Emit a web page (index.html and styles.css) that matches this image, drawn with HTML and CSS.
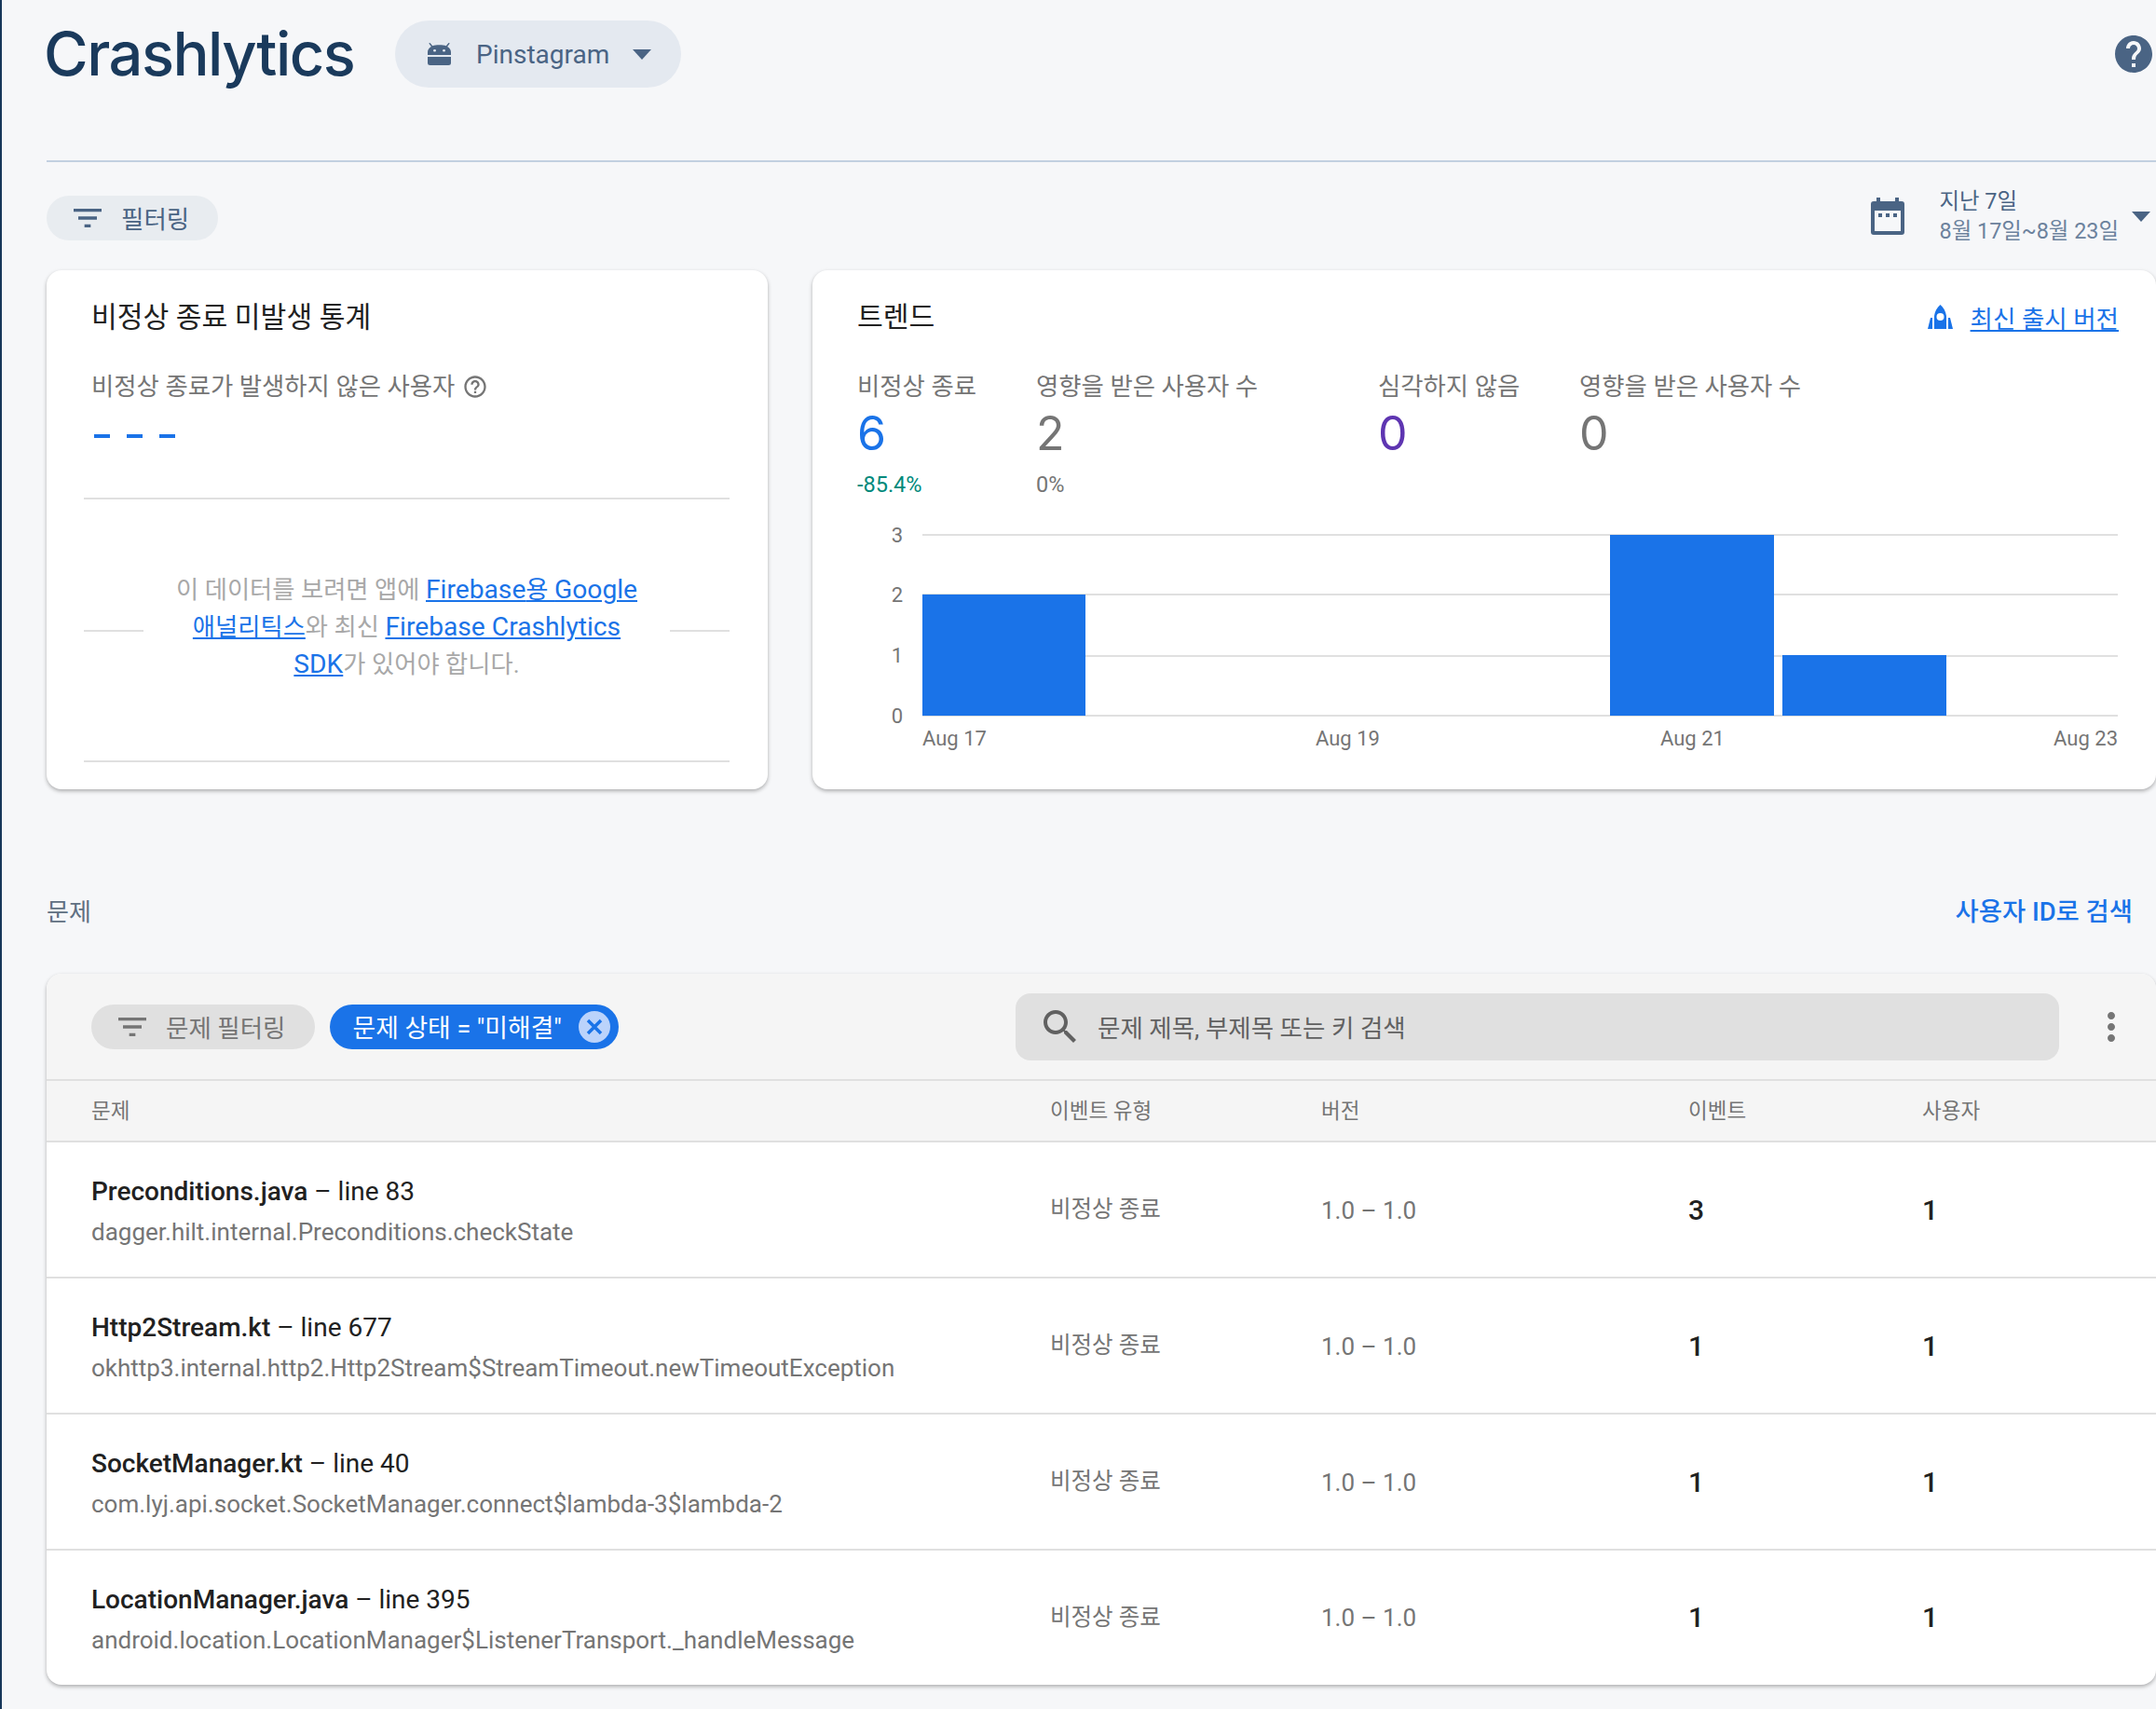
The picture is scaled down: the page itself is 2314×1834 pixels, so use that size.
FILE: index.html
```html
<!DOCTYPE html>
<html lang="ko">
<head>
    <meta charset="UTF-8">
    <title>Crashlytics</title>
    <link rel="stylesheet" href="styles.css">
</head>
<body>
    <div class="rail"></div>
    <main class="page">
        <header class="page-head">
            <h1 class="page-title">Crashlytics</h1>
            <div class="app-picker">
                <svg class="app-icon" viewBox="2.500 0 20 24" preserveAspectRatio="none"><path fill-rule="evenodd" d="M4.500 0l2.200 3.300C8.100 2.700 10.200 2.300 12.500 2.300s4.400.4 5.800 1L20.500 0l1 .6-2.100 3.300c2.100 1.400 3.100 3.700 3.100 6.100v3H2.500v-3c0-2.400 1-4.700 3.100-6.100L3.500.6zM8.500 7a1.200 1.200 0 1 0 0 2.400 1.200 1.200 0 0 0 0-2.400zm8 0a1.200 1.200 0 1 0 0 2.400 1.200 1.200 0 0 0 0-2.400zM2.500 15h20v7a2 2 0 0 1-2 2h-16a2 2 0 0 1-2-2z"/></svg>
                <span class="app-name">Pinstagram</span>
                <span class="caret"></span>
            </div>
            <svg class="help-icon" viewBox="0 0 24 24"><path d="M12 2C6.480 2 2 6.480 2 12s4.480 10 10 10 10-4.480 10-10S17.520 2 12 2zm1 17h-2v-2h2v2zm2.070-7.750l-.9.920C13.450 12.900 13 13.500 13 15h-2v-.5c0-1.100.45-2.100 1.170-2.830l1.240-1.260c.37-.36.59-.86.59-1.410 0-1.100-.9-2-2-2s-2 .9-2 2H8c0-2.210 1.790-4 4-4s4 1.790 4 4c0 .88-.36 1.680-.93 2.250z"/></svg>
        </header>

        <div class="filter-row">
            <div class="filter-pill page-filter">
                <svg class="filter-icon" viewBox="0 0 24 24"><path d="M10 18h4v-2h-4v2zM3 6v2h18V6H3zm3 7h12v-2H6v2z"/></svg>
                <span>필터링</span>
            </div>
            <div class="date-picker">
                <svg class="calendar-icon" viewBox="0 0 36 40"><path fill-rule="evenodd" d="M6 0h4v4h16V0h4v4h3a3 3 0 0 1 3 3v30a3 3 0 0 1-3 3H3a3 3 0 0 1-3-3V7a3 3 0 0 1 3-3h3zM4 14v22h28V14zm4 3h4v4H8zm8 0h4v4h-4zm8 0h4v4h-4z"/></svg>
                <div class="date-text">
                    <div class="date-range">지난 7일</div>
                    <div class="date-days">8월 17일~8월 23일</div>
                </div>
                <span class="caret date-caret"></span>
            </div>
        </div>

        <section class="cards">
            <div class="card stats-card">
                <h2 class="card-title">비정상 종료 미발생 통계</h2>
                <div class="stat-label">비정상 종료가 발생하지 않은 사용자
                    <svg class="hint-icon" viewBox="0 0 24 24"><path d="M11 18h2v-2h-2v2zm1-16C6.480 2 2 6.480 2 12s4.480 10 10 10 10-4.480 10-10S17.520 2 12 2zm0 18c-4.410 0-8-3.590-8-8s3.590-8 8-8 8 3.590 8 8-3.590 8-8 8zm0-14c-2.210 0-4 1.790-4 4h2c0-1.100.9-2 2-2s2 .9 2 2c0 2-3 1.750-3 5h2c0-2.250 3-2.500 3-5 0-2.210-1.790-4-4-4z"/></svg>
                </div>
                <div class="dashes"><i></i><i></i><i></i></div>
                <div class="empty-box">
                    <span class="empty-line"></span>
                    <p class="empty-text">이 데이터를 보려면 앱에 <a href="#"><span class="latin">Firebase</span>용 <span class="latin">Google</span> 애널리틱스</a>와 최신 <a href="#"><span class="latin">Firebase Crashlytics SDK</span></a>가 있어야 합니다.</p>
                    <span class="empty-line"></span>
                </div>
            </div>

            <div class="card trend-card">
                <div class="trend-head">
                    <h2 class="card-title">트렌드</h2>
                    <div class="release-link">
                        <svg class="rocket-icon" viewBox="0 0 27 26"><path fill-rule="evenodd" d="M13.500 0c3.500 3 5.800 7 6.500 12v14H7V12c.7-5 3-9 6.500-12zm0 9a4 4 0 1 0 0 8 4 4 0 0 0 0-8z"/><path d="M3 14h2v12H0zM22 14h2l3 12h-5z"/></svg>
                        <a href="#">최신 출시 버전</a>
                    </div>
                </div>
                <div class="trend-stats">
                    <div>
                        <div class="stat-label">비정상 종료</div>
                        <div class="stat-num num-blue">6</div>
                        <div class="stat-delta delta-good">-85.4%</div>
                    </div>
                    <div>
                        <div class="stat-label">영향을 받은 사용자 수</div>
                        <div class="stat-num">2</div>
                        <div class="stat-delta">0%</div>
                    </div>
                    <div>
                        <div class="stat-label">심각하지 않음</div>
                        <div class="stat-num num-purple">0</div>
                    </div>
                    <div>
                        <div class="stat-label">영향을 받은 사용자 수</div>
                        <div class="stat-num">0</div>
                    </div>
                </div>
                <svg class="chart" viewBox="0 0 1353 270">
                    <rect class="grid-line" x="70" y="23" width="1283" height="2"/>
                    <rect class="grid-line" x="70" y="87" width="1283" height="2"/>
                    <rect class="grid-line" x="70" y="153" width="1283" height="2"/>
                    <rect class="grid-line" x="70" y="217" width="1283" height="2"/>
                    <rect class="bar" x="70" y="88" width="175" height="130"/>
                    <rect class="bar" x="808" y="24" width="176" height="194"/>
                    <rect class="bar" x="993" y="153" width="176" height="65"/>
                    <text class="axis-text" x="49" y="32" text-anchor="end">3</text>
                    <text class="axis-text" x="49" y="96" text-anchor="end">2</text>
                    <text class="axis-text" x="49" y="161" text-anchor="end">1</text>
                    <text class="axis-text" x="49" y="226" text-anchor="end">0</text>
                    <text class="axis-text" x="70" y="250">Aug 17</text>
                    <text class="axis-text" x="492" y="250">Aug 19</text>
                    <text class="axis-text" x="862" y="250">Aug 21</text>
                    <text class="axis-text" x="1353" y="250" text-anchor="end">Aug 23</text>
                </svg>
            </div>
        </section>

        <div class="issues-head">
            <span class="issues-title">문제</span>
            <a class="user-search" href="#">사용자 ID로 검색</a>
        </div>

        <section class="issues">
            <div class="issues-bar">
                <div class="filter-pill issue-filter">
                    <svg class="filter-icon" viewBox="0 0 24 24"><path d="M10 18h4v-2h-4v2zM3 6v2h18V6H3zm3 7h12v-2H6v2z"/></svg>
                    <span>문제 필터링</span>
                </div>
                <div class="state-chip">
                    <span>문제 상태 = "미해결"</span>
                    <svg class="chip-close" viewBox="0 0 34 34"><circle cx="17" cy="17" r="17"/><path d="M10 10l14 14M24 10L10 24"/></svg>
                </div>
                <div class="search-box">
                    <svg class="search-icon" viewBox="0 0 24 24"><path d="M15.500 14h-.79l-.28-.27C15.410 12.590 16 11.110 16 9.500 16 5.910 13.090 3 9.500 3S3 5.910 3 9.500 5.910 16 9.500 16c1.610 0 3.090-.59 4.230-1.570l.27.28v.79l5 4.990L20.490 19l-4.990-5zm-6 0C7.010 14 5 11.990 5 9.500S7.010 5 9.500 5 14 7.010 14 9.500 11.990 14 9.500 14z"/></svg>
                    <span>문제 제목, 부제목 또는 키 검색</span>
                </div>
                <div class="more-box">
                    <svg class="more-icon" viewBox="0 0 24 24"><path d="M12 8c1.100 0 2-.9 2-2s-.9-2-2-2-2 .9-2 2 .9 2 2 2zm0 2c-1.100 0-2 .9-2 2s.9 2 2 2 2-.9 2-2-.9-2-2-2zm0 6c-1.100 0-2 .9-2 2s.9 2 2 2 2-.9 2-2-.9-2-2-2z"/></svg>
                </div>
            </div>

            <div class="issue-grid issue-header">
                <div>문제</div>
                <div>이벤트 유형</div>
                <div>버전</div>
                <div>이벤트</div>
                <div>사용자</div>
            </div>

            <div class="issue-grid issue-row">
                <div>
                    <div class="issue-name"><b>Preconditions.java</b> – line 83</div>
                    <div class="issue-sub">dagger.hilt.internal.Preconditions.checkState</div>
                </div>
                <div class="issue-type">비정상 종료</div>
                <div class="issue-version">1.0 – 1.0</div>
                <div class="issue-count">3</div>
                <div class="issue-count">1</div>
            </div>
            <div class="issue-grid issue-row">
                <div>
                    <div class="issue-name"><b>Http2Stream.kt</b> – line 677</div>
                    <div class="issue-sub">okhttp3.internal.http2.Http2Stream$StreamTimeout.newTimeoutException</div>
                </div>
                <div class="issue-type">비정상 종료</div>
                <div class="issue-version">1.0 – 1.0</div>
                <div class="issue-count">1</div>
                <div class="issue-count">1</div>
            </div>
            <div class="issue-grid issue-row">
                <div>
                    <div class="issue-name"><b>SocketManager.kt</b> – line 40</div>
                    <div class="issue-sub">com.lyj.api.socket.SocketManager.connect$lambda-3$lambda-2</div>
                </div>
                <div class="issue-type">비정상 종료</div>
                <div class="issue-version">1.0 – 1.0</div>
                <div class="issue-count">1</div>
                <div class="issue-count">1</div>
            </div>
            <div class="issue-grid issue-row">
                <div>
                    <div class="issue-name"><b>LocationManager.java</b> – line 395</div>
                    <div class="issue-sub">android.location.LocationManager$ListenerTransport._handleMessage</div>
                </div>
                <div class="issue-type">비정상 종료</div>
                <div class="issue-version">1.0 – 1.0</div>
                <div class="issue-count">1</div>
                <div class="issue-count">1</div>
            </div>
        </section>
    </main>
</body>
</html>
```

FILE: styles.css
```css
* {
    box-sizing: border-box;
}
html, body {
    margin: 0;
    padding: 0;
    height: 100%;
    overflow: hidden;
}
body {
    display: flex;
    background: #f6f7f9;
    font-family: Roboto, "Noto Sans CJK KR", sans-serif;
    color: #212121;
}
a {
    color: #1a73e8;
}
.rail {
    width: 2px;
    flex: none;
    background: #17375a;
}
.page {
    flex: 1;
    min-width: 0;
    padding-left: 48px;
}

/* top bar */
.page-head {
    display: flex;
    align-items: flex-start;
    height: 174px;
    padding-top: 22px;
    border-bottom: 2px solid #c2d0e0;
}
.page-title {
    margin: 0 0 0 -3px;
    width: 377px;
    font-family: Inter, sans-serif;
    font-size: 65px;
    font-weight: 500;
    line-height: 72px;
    letter-spacing: -1.5px;
    color: #1a3a5c;
}
.app-picker {
    display: flex;
    align-items: center;
    height: 72px;
    padding: 0 32px 0 35px;
    border-radius: 36px;
    background: #e4e9f0;
    color: #4a6484;
    font-size: 28px;
}
.app-icon {
    width: 25px;
    height: 24px;
    margin-right: 27px;
    fill: #4a6484;
}
.caret {
    width: 0;
    height: 0;
    margin-left: 25px;
    border-left: 10px solid transparent;
    border-right: 10px solid transparent;
    border-top: 11px solid #4a6484;
}
.help-icon {
    width: 48px;
    height: 48px;
    margin: 12px 0 0 auto;
    fill: #4a6484;
}

/* filter row */
.filter-row {
    display: flex;
    align-items: center;
    justify-content: space-between;
    height: 116px;
    padding-top: 4px;
}
.filter-pill {
    display: flex;
    align-items: center;
    gap: 16px;
    height: 48px;
    padding: 0 32px 0 24px;
    border-radius: 24px;
    background: #e8ecf0;
    color: #4a6484;
    font-size: 26.500px;
}
.page-filter {
    padding-right: 31px;
}
.page-filter span {
    margin-top: -2px;
}
.filter-icon {
    width: 40px;
    height: 40px;
    fill: #4a6484;
}
.date-picker {
    display: flex;
    align-items: center;
    margin-bottom: 4px;
}
.calendar-icon {
    width: 36px;
    height: 40px;
    margin-right: 38px;
    fill: #4a6484;
}
.date-text {
    line-height: 32px;
    font-size: 23.400px;
}
.date-range {
    color: #4a6484;
}
.date-days {
    color: #6c829d;
}
.date-caret {
    margin: 0 6px 0 14px;
}

/* cards */
.cards {
    display: flex;
    gap: 48px;
    height: 557px;
}
.card {
    background: white;
    border-radius: 16px;
    box-shadow: 0 2px 4px rgba(0, 0, 0, 0.3);
}
.stats-card {
    width: 774px;
    flex: none;
    padding: 31px 41px 0 40px;
}
.card-title {
    margin: 0;
    font-size: 30.200px;
    font-weight: 400;
    line-height: 40px;
    color: #212121;
}
.stats-card .card-title,
.stats-card .stat-label {
    padding-left: 8px;
}
.stat-label {
    display: flex;
    align-items: center;
    gap: 8px;
    margin-top: 34px;
    font-size: 26.400px;
    line-height: 40px;
    color: #757575;
}
.hint-icon {
    width: 28px;
    height: 28px;
    fill: #757575;
}
.dashes {
    display: flex;
    gap: 18px;
    margin: 31px 0 64px 11px;
}
.dashes i {
    width: 17px;
    height: 4px;
    background: #1a73e8;
}
.empty-box {
    display: flex;
    align-items: center;
    height: 284px;
    border-top: 2px solid #e0e0e0;
    border-bottom: 2px solid #e0e0e0;
}
.empty-line {
    width: 64px;
    height: 2px;
    margin-top: 2px;
    flex: none;
    background: #e0e0e0;
}
.empty-text {
    flex: 1;
    margin: 0;
    padding: 0 24px 6px;
    font-size: 26.300px;
    line-height: 40px;
    text-align: center;
    color: #a8a8a8;
}
.latin {
    font-size: 28.200px;
}

.trend-card {
    flex: 1;
    min-width: 0;
    padding: 31px 41px 0 48px;
}
.trend-head {
    display: flex;
    justify-content: space-between;
    align-items: center;
}
.release-link {
    display: flex;
    align-items: center;
    gap: 19px;
    margin: -2px -1px 0 0;
    font-size: 26.500px;
}
.rocket-icon {
    width: 27px;
    height: 26px;
    fill: #1a73e8;
}
.trend-stats {
    display: grid;
    grid-template-columns: 192px 367px 216px 1fr;
    height: 189px;
}
.stat-num {
    font-family: Inter, sans-serif;
    font-size: 50px;
    line-height: 60px;
    color: #757575;
}
.num-blue {
    color: #1a73e8;
}
.num-purple {
    color: #5e35b1;
}
.stat-delta {
    margin-top: 10px;
    font-size: 23.500px;
    line-height: 30px;
    color: #757575;
}
.delta-good {
    color: #00897b;
}
.chart {
    display: block;
    width: 1353px;
    height: 270px;
}
.grid-line {
    fill: #e0e0e0;
}
.bar {
    fill: #1a73e8;
}
.axis-text {
    font-size: 22px;
    fill: #757575;
}

/* issues */
.issues-head {
    display: flex;
    justify-content: space-between;
    align-items: center;
    height: 198px;
    padding: 60px 25px 0 0;
}
.issues-title {
    font-size: 26px;
    color: #5f6f82;
}
.user-search {
    font-size: 27.400px;
    font-weight: 500;
    text-decoration: none;
}
.issues {
    height: 763px;
    background: white;
    border-radius: 16px;
    box-shadow: 0 2px 4px rgba(0, 0, 0, 0.3);
    overflow: hidden;
}
.issues-bar {
    display: flex;
    align-items: center;
    gap: 16px;
    height: 115px;
    padding-left: 48px;
    border-bottom: 2px solid #e0e0e0;
    background: #f5f5f5;
}
.issue-filter {
    background: #e0e0e0;
    color: #757575;
}
.issue-filter .filter-icon {
    fill: #757575;
}
.state-chip {
    display: flex;
    align-items: center;
    height: 48px;
    padding: 0 9px 0 24px;
    border-radius: 24px;
    background: #1a73e8;
    color: white;
    font-size: 26.800px;
}
.chip-close {
    width: 34px;
    height: 34px;
    margin-left: 18px;
}
.chip-close circle {
    fill: #bbd3fb;
}
.chip-close path {
    fill: none;
    stroke: #1a73e8;
    stroke-width: 3.500;
}
.search-box {
    display: flex;
    align-items: center;
    gap: 16px;
    width: 1120px;
    height: 72px;
    margin-left: auto;
    padding-left: 24px;
    border-radius: 16px;
    background: #e0e0e0;
    color: #616161;
    font-size: 26.500px;
}
.search-icon {
    width: 48px;
    height: 48px;
    fill: #616161;
}
.more-box {
    display: flex;
    justify-content: center;
    width: 104px;
    margin-left: -16px;
    padding-left: 8px;
}
.more-icon {
    width: 48px;
    height: 48px;
    fill: #757575;
}
.issue-grid {
    display: grid;
    grid-template-columns: 1029px 291px 394px 251px 1fr;
    align-items: center;
    padding-left: 48px;
}
.issue-header {
    height: 66px;
    padding-bottom: 4px;
    border-bottom: 2px solid #e0e0e0;
    background: #f5f5f5;
    font-size: 22.500px;
    color: #757575;
}
.issue-row {
    height: 146px;
    border-bottom: 2px solid #e0e0e0;
}
.issue-row:last-child {
    height: 143px;
    border-bottom: none;
}
.issue-name {
    margin-top: 5px;
    font-size: 28px;
    line-height: 40px;
    color: #212121;
}
.issue-name b {
    font-weight: 500;
}
.issue-sub {
    margin-top: 3px;
    font-size: 26px;
    line-height: 40px;
    color: #757575;
}
.issue-type {
    margin-top: -5px;
    font-size: 24.500px;
    color: #757575;
}
.issue-version {
    margin-top: 1px;
    font-size: 26px;
    color: #757575;
}
.issue-count {
    font-size: 30px;
    font-weight: 500;
    color: #212121;
}
```
